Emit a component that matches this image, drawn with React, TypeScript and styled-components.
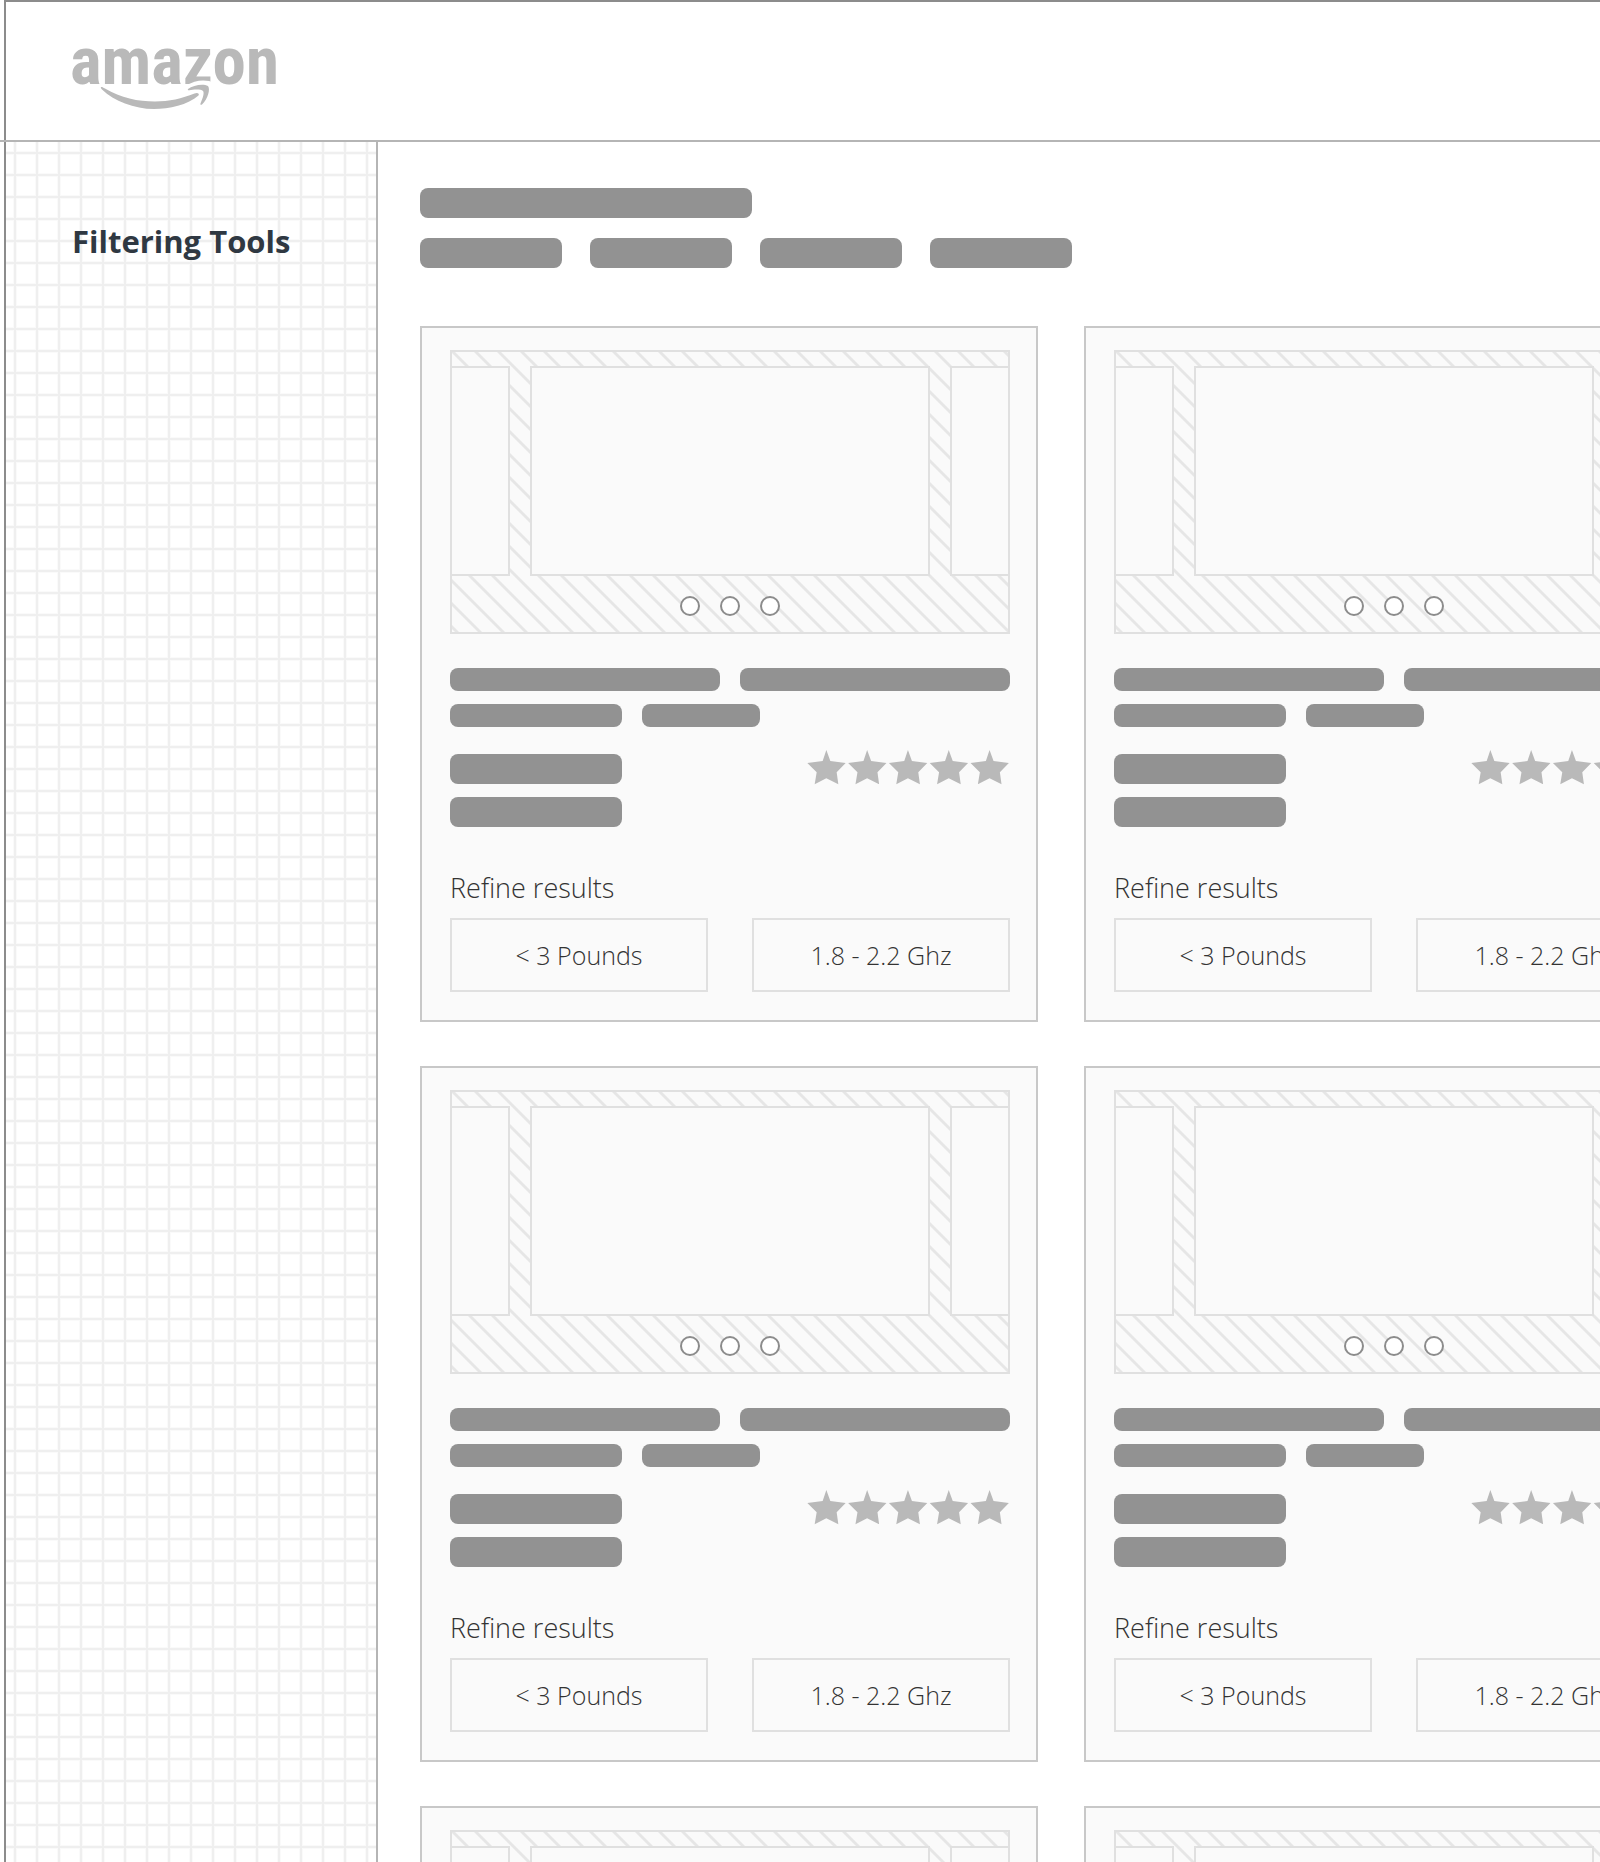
import React from "react";
import styled, { createGlobalStyle } from "styled-components";

const color = {
  frame: "#8c8c8c",
  rule: "#b5b5b5",
  cardLine: "#c8c8c8",
  line: "#e0e0e0",
  hatch: "#e6e6e6",
  grid: "#efefef",
  gridSoft: "#fafafa",
  card: "#fafafa",
  bar: "#929292",
  mark: "#b9b9b9",
  heading: "#2f3842",
  text: "#333333",
};

const GlobalStyle = createGlobalStyle`
  *, *::before, *::after { box-sizing: border-box; }
  body {
    margin: 0;
    background: #ffffff;
    color: ${color.text};
    font-family: "Open Sans", "Noto Sans", sans-serif;
  }
`;

const Page = styled.div`
  display: flex;
  flex-direction: column;
  height: 100vh;
  overflow: hidden;
`;

const Header = styled.header`
  flex: none;
  padding-left: 4px;
  border-bottom: 2px solid ${color.rule};
`;

const HeaderInner = styled.div`
  display: flex;
  align-items: center;
  height: 140px;
  padding-left: 66px;
  border-top: 2px solid ${color.frame};
  border-left: 2px solid ${color.frame};
`;

const HomeLink = styled.a`
  display: block;
  color: ${color.mark};
  text-decoration: none;
`;

const LogoSvg = styled.svg`
  display: block;
  overflow: visible;

  text {
    font-family: "Roboto Condensed", Roboto, sans-serif;
    font-size: 67px;
    font-weight: 700;
  }
`;

const Body = styled.div`
  display: flex;
  flex: 1;
  min-height: 0;
`;

const Sidebar = styled.aside`
  flex: none;
  width: 374px;
  margin-left: 4px;
  padding: 78px 66px 0;
  border-left: 2px solid ${color.frame};
  border-right: 2px solid ${color.rule};
  background-image: linear-gradient(
      transparent 1px,
      ${color.grid} 1px,
      ${color.grid} 3px,
      transparent 3px
    ),
    linear-gradient(
      90deg,
      transparent 1px,
      ${color.grid} 1px,
      ${color.grid} 3px,
      transparent 3px
    ),
    linear-gradient(${color.gridSoft} 4px, transparent 4px),
    linear-gradient(90deg, ${color.gridSoft} 4px, transparent 4px);
  background-size: 22px 22px;
  background-position: 7px 9px;
`;

const SidebarTitle = styled.h2`
  margin: 0;
  color: ${color.heading};
  font-size: 31px;
  font-weight: 700;
  line-height: 42px;
  white-space: nowrap;
`;

const Main = styled.main`
  flex: 1;
  min-width: 0;
  padding: 46px 0 0 42px;
`;

const Intro = styled.div`
  display: flex;
  flex-direction: column;
  gap: 20px;
  margin-bottom: 58px;
`;

const BarRow = styled.div<{ $gap: number }>`
  display: flex;
  gap: ${(p) => p.$gap}px;
`;

const Bar = styled.div<{ $width?: number; $tall?: boolean }>`
  flex: ${(p) => (p.$width ? "none" : 1)};
  width: ${(p) => (p.$width ? `${p.$width}px` : "auto")};
  height: ${(p) => (p.$tall ? 30 : 23)}px;
  border-radius: 8px;
  background: ${color.bar};
`;

const Results = styled.div`
  display: grid;
  grid-template-columns: repeat(2, 618px);
  gap: 44px 46px;
`;

const Card = styled.article`
  padding: 22px 26px 28px 28px;
  border: 2px solid ${color.cardLine};
  background: ${color.card};
`;

const Carousel = styled.div`
  padding-top: 14px;
  border: 2px solid ${color.line};
  background-image: linear-gradient(
    45deg,
    ${color.hatch} 3%,
    transparent 6%,
    transparent 44%,
    ${color.hatch} 47%,
    ${color.hatch} 53%,
    transparent 56%,
    transparent 94%,
    ${color.hatch} 97%
  );
  background-size: 23px 23px;
  background-position: 1px 0;
`;

const Slides = styled.div`
  display: flex;
  gap: 20px;
  height: 210px;
`;

const Slide = styled.div<{ $edge?: "left" | "right" }>`
  flex: ${(p) => (p.$edge ? "none" : 1)};
  width: ${(p) => (p.$edge ? "58px" : "auto")};
  border: 2px solid ${color.line};
  border-left-width: ${(p) => (p.$edge === "left" ? 0 : 2)}px;
  border-right-width: ${(p) => (p.$edge === "right" ? 0 : 2)}px;
  background: ${color.card};
`;

const Dots = styled.div`
  display: flex;
  justify-content: center;
  gap: 20px;
  padding: 20px 0 16px;
`;

const Dot = styled.span`
  width: 20px;
  height: 20px;
  border: 2px solid ${color.frame};
  border-radius: 50%;
  background: #ffffff;
`;

const TitleBars = styled.div`
  display: flex;
  flex-direction: column;
  gap: 13px;
  margin-top: 34px;
`;

const Summary = styled.div`
  display: flex;
  justify-content: space-between;
  align-items: flex-start;
  margin-top: 23px;
`;

const PriceBars = styled.div`
  display: flex;
  flex-direction: column;
  gap: 13px;
  padding-top: 4px;
`;

const Refine = styled.h3`
  margin: 43px 0 12px;
  font-size: 27px;
  font-weight: 300;
  line-height: 36px;
`;

const Options = styled.div`
  display: flex;
  gap: 44px;
`;

const Option = styled.button`
  flex: 1;
  height: 74px;
  padding: 0;
  border: 2px solid ${color.line};
  border-radius: 0;
  background: transparent;
  color: inherit;
  font-family: inherit;
  font-size: 25px;
  font-weight: 300;
  line-height: 34px;
  white-space: nowrap;
  cursor: pointer;
`;

function Logo() {
  return (
    <LogoSvg width="206" height="78" viewBox="0 0 206 78" fill="currentColor">
      <text x="-2" y="52">amazon</text>
      <path d="M114 54Q128 45 143 51V57H114z" fill="#ffffff" />
      <path d="M29 55C30 54.600 31 55.300 33 56.500C49 66 66 69.500 83 69.500C97 69.500 110 66.500 122.500 61.500C125 60.300 128 61.300 126.500 63.500C116 73 97 77 82 77C62 77 42 69 30 57.500C29 56.500 28.500 55.500 29 55z" />
      <path d="M116 57C121 53.300 131 51.500 136 54C138.500 57 136 67 130 72.500C129 73 128 72.800 128.500 71.500C131 65.500 132.500 61 131 59C129 56.800 121 57.500 117.500 58.200C116 58.400 115.500 57.800 116 57z" />
    </LogoSvg>
  );
}

const STAR = "57,0 69,33 115,39 88,67 93,103 57,85 22,103 28,67 0,39 46,33";

function Stars() {
  return (
    <svg width="204" height="35" viewBox="-4 0 612 105" fill={color.mark} role="img" aria-label="5 stars">
      {[0, 1, 2, 3, 4].map((n) => (
        <polygon key={n} points={STAR} transform={`translate(${n * 122.4} 0)`} />
      ))}
    </svg>
  );
}

function ResultCard() {
  return (
    <Card>
      <Carousel>
        <Slides>
          <Slide $edge="left" />
          <Slide />
          <Slide $edge="right" />
        </Slides>
        <Dots>
          <Dot />
          <Dot />
          <Dot />
        </Dots>
      </Carousel>
      <TitleBars>
        <BarRow $gap={20}>
          <Bar />
          <Bar />
        </BarRow>
        <BarRow $gap={20}>
          <Bar $width={172} />
          <Bar $width={118} />
        </BarRow>
      </TitleBars>
      <Summary>
        <PriceBars>
          <Bar $tall $width={172} />
          <Bar $tall $width={172} />
        </PriceBars>
        <Stars />
      </Summary>
      <Refine>Refine results</Refine>
      <Options>
        <Option type="button">{"< 3 Pounds"}</Option>
        <Option type="button">1.8 - 2.2 Ghz</Option>
      </Options>
    </Card>
  );
}

export default function App() {
  return (
    <Page>
      <GlobalStyle />
      <Header>
        <HeaderInner>
          <HomeLink href="#">
            <Logo />
          </HomeLink>
        </HeaderInner>
      </Header>
      <Body>
        <Sidebar>
          <SidebarTitle>Filtering Tools</SidebarTitle>
        </Sidebar>
        <Main>
          <Intro>
            <Bar $tall $width={332} />
            <BarRow $gap={28}>
              {[0, 1, 2, 3].map((n) => (
                <Bar key={n} $tall $width={142} />
              ))}
            </BarRow>
          </Intro>
          <Results>
            {[0, 1, 2, 3, 4, 5].map((n) => (
              <ResultCard key={n} />
            ))}
          </Results>
        </Main>
      </Body>
    </Page>
  );
}
